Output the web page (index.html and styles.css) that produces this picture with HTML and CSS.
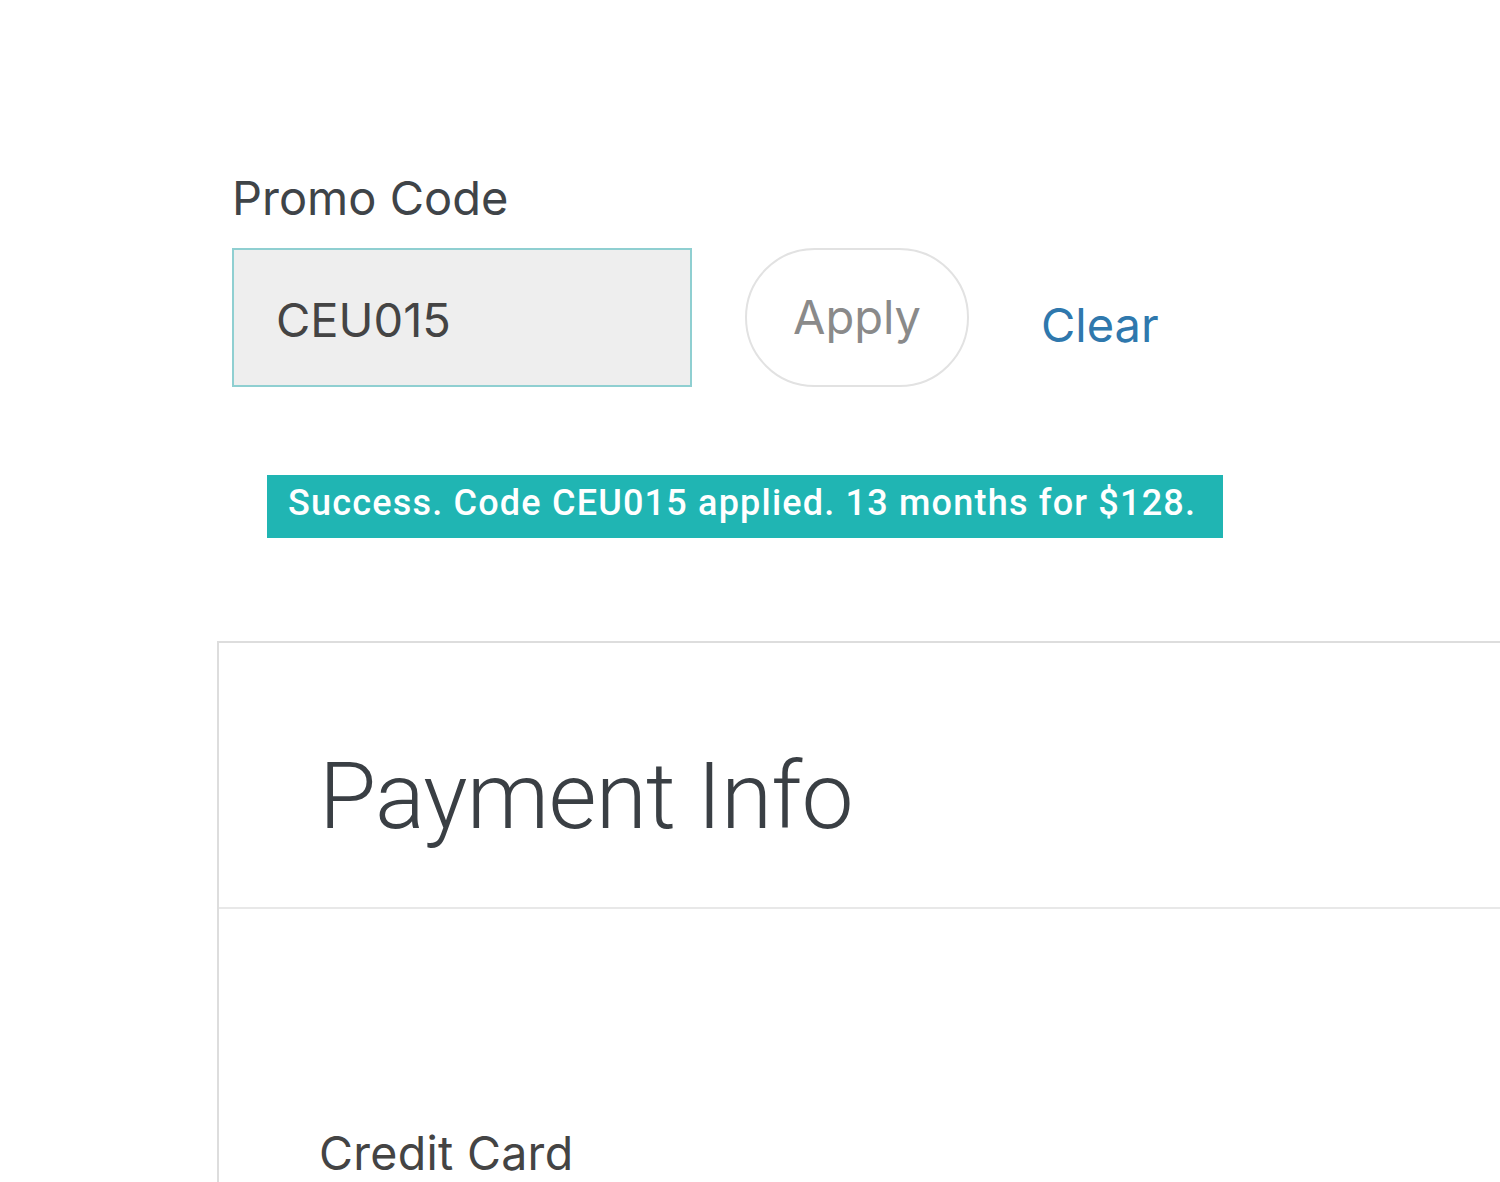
FILE: index.html
```html
<!DOCTYPE html>
<html>
<head>
<meta charset="utf-8">
<link rel="stylesheet" href="styles.css">
</head>
<body>
<div class="page">
  <section class="promo">
    <div class="promo-label">Promo Code</div>
    <div class="promo-row">
      <div class="promo-input">CEU015</div>
      <button class="apply-btn">Apply</button>
      <a class="clear-link">Clear</a>
    </div>
    <div class="success">Success. Code CEU015 applied. 13 months for $128.</div>
  </section>
  <section class="card">
    <div class="card-head">
      <h1 class="card-title">Payment Info</h1>
    </div>
    <div class="card-body">
      <div class="field-label">Credit Card</div>
    </div>
  </section>
</div>
</body>
</html>
```
FILE: styles.css
```css
html, body {
  margin: 0;
  padding: 0;
  background: #ffffff;
  overflow: hidden;
}
.page {
  width: 1500px;
  height: 1182px;
  overflow: hidden;
  font-family: Inter, "Liberation Sans", sans-serif;
}
.promo {
  padding: 167px 0 0 232px;
}
.promo-label {
  font-size: 47px;
  line-height: 62px;
  color: #3f4448;
  height: 81px;
}
.promo-row {
  display: flex;
  align-items: center;
  height: 139px;
}
.promo-input {
  box-sizing: border-box;
  width: 460px;
  height: 139px;
  border: 2px solid #8fcfd1;
  background: #eeeeee;
  padding: 4px 0 0 42px;
  display: flex;
  align-items: center;
  font-size: 47px;
  color: #444;
}
.apply-btn {
  box-sizing: border-box;
  margin-left: 53px;
  width: 224px;
  height: 139px;
  border: 2px solid #e2e2e2;
  border-radius: 70px;
  background: #fff;
  font-family: Inter, "Liberation Sans", sans-serif;
  font-size: 47px;
  color: #8a8a8a;
  padding: 0 0 2px 0;
}
.clear-link {
  margin-left: 72px;
  margin-top: 14px;
  font-size: 47px;
  color: #2f78ad;
}
.success {
  margin: 88px 0 0 35px;
  width: 956px;
  height: 63px;
  box-sizing: border-box;
  background: #20b5b3;
  color: #fff;
  font-family: Roboto, "Liberation Sans", sans-serif;
  font-weight: 500;
  font-size: 36px;
  letter-spacing: 1.2px;
  line-height: 56px;
  padding-left: 21px;
  white-space: nowrap;
}
.card {
  margin: 103px 0 0 217px;
  border-left: 2px solid #dddddd;
  border-top: 2px solid #dddddd;
  height: 600px;
}
.card-head {
  height: 266px;
  border-bottom: 2px solid #e8e8e8;
  box-sizing: border-box;
  padding: 99px 0 0 100px;
}
.card-title {
  margin: 0;
  font-family: Roboto, "Liberation Sans", sans-serif;
  font-weight: 300;
  font-size: 93px;
  line-height: 110px;
  color: #3a3f44;
  letter-spacing: -0.8px;
}
.card-body {
  padding: 215px 0 0 100px;
}
.field-label {
  font-size: 46.5px;
  line-height: 58px;
  color: #444;
  letter-spacing: 0.3px;
}
```
